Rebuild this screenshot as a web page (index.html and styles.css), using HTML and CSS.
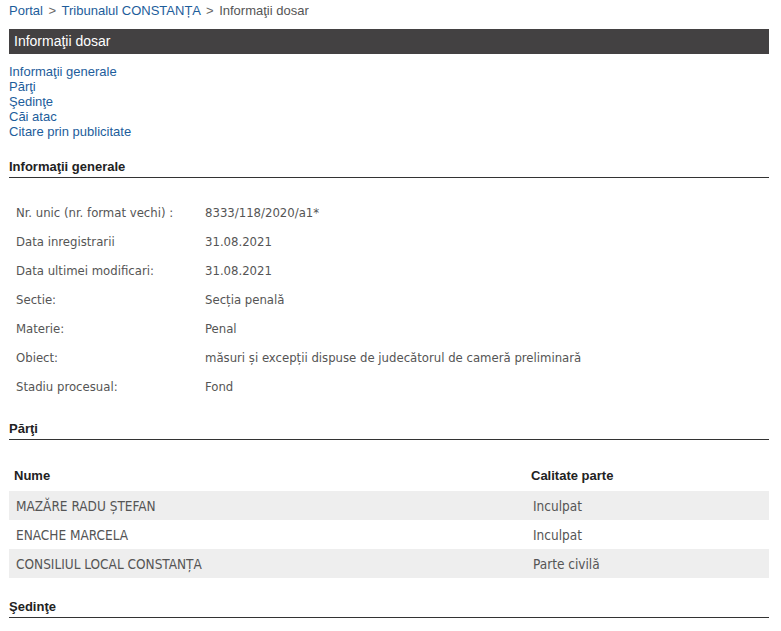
FILE: index.html
```html
<!DOCTYPE html>
<html>
<head>
<meta charset="utf-8">
<link rel="stylesheet" href="styles.css">
</head>
<body>
<div class="page">
  <div class="crumbs"><a href="#">Portal</a> <span class="sep">&gt;</span> <a href="#">Tribunalul CONSTANȚA</a> <span class="sep">&gt;</span> <span class="cur">Informaţii dosar</span></div>
  <div class="bar">Informaţii dosar</div>
  <ul class="toc">
    <li><a href="#">Informaţii generale</a></li>
    <li><a href="#">Părţi</a></li>
    <li><a href="#">Şedinţe</a></li>
    <li><a href="#">Căi atac</a></li>
    <li><a href="#">Citare prin publicitate</a></li>
  </ul>
  <h2 class="sect first">Informaţii generale</h2>
  <table class="info">
    <tr><td class="lbl">Nr. unic (nr. format vechi) :</td><td>8333/118/2020/a1*</td></tr>
    <tr><td class="lbl">Data inregistrarii</td><td>31.08.2021</td></tr>
    <tr><td class="lbl">Data ultimei modificari:</td><td>31.08.2021</td></tr>
    <tr><td class="lbl">Sectie:</td><td>Secția penală</td></tr>
    <tr><td class="lbl">Materie:</td><td>Penal</td></tr>
    <tr><td class="lbl">Obiect:</td><td>măsuri și excepții dispuse de judecătorul de cameră preliminară</td></tr>
    <tr><td class="lbl">Stadiu procesual:</td><td>Fond</td></tr>
  </table>
  <h2 class="sect">Părţi</h2>
  <table class="parti">
    <thead><tr><th class="c1">Nume</th><th>Calitate parte</th></tr></thead>
    <tbody>
      <tr class="alt"><td>MAZĂRE RADU ȘTEFAN</td><td>Inculpat</td></tr>
      <tr><td>ENACHE MARCELA</td><td>Inculpat</td></tr>
      <tr class="alt"><td>CONSILIUL LOCAL CONSTANȚA</td><td>Parte civilă</td></tr>
    </tbody>
  </table>
  <h2 class="sect">Şedinţe</h2>
</div>
</body>
</html>
```
FILE: styles.css
```css
html, body { margin: 0; padding: 0; background: #fff; }
body { font-family: "Liberation Sans", Arial, sans-serif; }
.page { width: 760px; padding-left: 9px; }
a { color: #1d5d9b; text-decoration: none; }
.crumbs { font-size: 13px; line-height: 18px; padding-top: 2px; color: #555; height: 27px; }
.crumbs .sep { color: #666; margin: 0 2px; }
.crumbs .cur { color: #555; }
.bar { background: #434142; color: #fff; font-size: 14px; height: 25px; line-height: 25px; padding-left: 5px; }
.toc { list-style: none; margin: 10px 0 0; padding: 0; font-size: 13px; line-height: 15px; }
.sect { font-size: 13px; font-weight: bold; color: #222; margin: 19px 0 0; padding: 0 0 2px; line-height: 17px; border-bottom: 1px solid #333; }
.info { border-collapse: collapse; margin-top: 20px; font-family: "DejaVu Sans Condensed", "DejaVu Sans", sans-serif; font-size: 13px; color: #555; }
.info td { height: 29px; padding: 0 0 0 7px; vertical-align: middle; }
.info td.lbl { width: 182px; }
.parti { border-collapse: collapse; width: 760px; margin-top: 20px; }
.parti th { text-align: left; font-size: 13px; font-weight: bold; color: #222; height: 31px; padding: 0 0 0 5px; }
.parti th.c1 { width: 512px; }
.parti td { height: 29px; padding: 0 0 0 7px; font-family: "DejaVu Sans Condensed", "DejaVu Sans", sans-serif; font-size: 13.5px; color: #555; }
.parti tr.alt td { background: #eeeeee; }
.parti + .sect { margin-top: 20px; }
```
